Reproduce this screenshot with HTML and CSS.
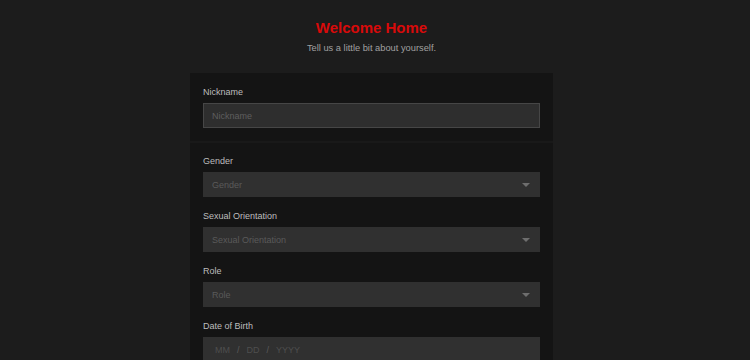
FILE: index.html
```html
<!DOCTYPE html>
<html lang="en">

<head>
    <meta charset="UTF-8">
    <title>Welcome Home</title>
    <link rel="stylesheet" href="styles.css">
</head>

<body>

    <div class="page">
        <header class="intro">
            <h1 class="title">Welcome Home</h1>
            <p class="subtitle">Tell us a little bit about yourself.</p>
        </header>

        <form class="card">
            <section class="card-section">
                <div class="field">
                    <label class="field-label" for="nickname">Nickname</label>
                    <input class="text-input" id="nickname" type="text" placeholder="Nickname" autofocus>
                </div>
            </section>

            <section class="card-section">
                <div class="field">
                    <label class="field-label">Gender</label>
                    <div class="select-wrap">
                        <select class="select-input">
                            <option>Gender</option>
                        </select>
                    </div>
                </div>
                <div class="field">
                    <label class="field-label">Sexual Orientation</label>
                    <div class="select-wrap">
                        <select class="select-input">
                            <option>Sexual Orientation</option>
                        </select>
                    </div>
                </div>
                <div class="field">
                    <label class="field-label">Role</label>
                    <div class="select-wrap">
                        <select class="select-input">
                            <option>Role</option>
                        </select>
                    </div>
                </div>
                <div class="field">
                    <label class="field-label">Date of Birth</label>
                    <div class="date-input">
                        <span class="date-part">MM</span>
                        <span class="date-sep">/</span>
                        <span class="date-part">DD</span>
                        <span class="date-sep">/</span>
                        <span class="date-part">YYYY</span>
                    </div>
                </div>
            </section>
        </form>
    </div>

</body>

</html>
```

FILE: styles.css
```css
body {
    margin: 0;
    background-color: #1c1c1c;
    font-family: "Liberation Sans", Arial, sans-serif;
}

.page {
    display: flex;
    flex-direction: column;
    align-items: center;
    padding-right: 7px;
}

.intro {
    padding-top: 19px;
    text-align: center;
}

.title {
    margin: 0;
    font-size: 15px;
    line-height: 17px;
    font-weight: bold;
    color: #d80a0a;
}

.subtitle {
    margin: 7px 0 0;
    font-size: 9.3px;
    line-height: 10px;
    color: #a0a0a0;
}

.card {
    width: 363px;
    margin-top: 20px;
    background-color: #141414;
}

.card-section {
    padding: 14px 13px 13px;
}

.card-section + .card-section {
    border-top: 2px solid #191919;
    padding-top: 13px;
}

.field {
    display: flex;
    flex-direction: column;
}

.field + .field {
    margin-top: 14px;
}

.field-label {
    font-size: 9px;
    line-height: 10px;
    color: #bdbdbd;
    margin-bottom: 6px;
}

.text-input,
.select-input,
.date-input {
    box-sizing: border-box;
    width: 100%;
    height: 25px;
    padding: 0 9px;
    font-family: "Liberation Sans", Arial, sans-serif;
    font-size: 9px;
    color: #5a5a5a;
    background-color: #303030;
    border: none;
    border-radius: 0;
    outline: none;
}

.text-input {
    background-color: #2e2e2e;
    border: 1px solid #464646;
    padding-left: 8px;
    color: #bbbbbb;
    caret-color: #bbbbbb;
}

.text-input::placeholder {
    color: #5e5e5e;
}

.select-wrap {
    position: relative;
}

.select-input {
    appearance: none;
    -webkit-appearance: none;
    display: block;
}

/* dropdown arrow */
.select-wrap::after {
    content: "";
    position: absolute;
    right: 10px;
    top: 11px;
    border-left: 4px solid transparent;
    border-right: 4px solid transparent;
    border-top: 4px solid #6e6e6e;
    pointer-events: none;
}

.date-input {
    display: flex;
    align-items: center;
    gap: 7px;
    padding-left: 12px;
    color: #4e4e4e;
}

.date-sep {
    color: #5a5a5a;
}
```
